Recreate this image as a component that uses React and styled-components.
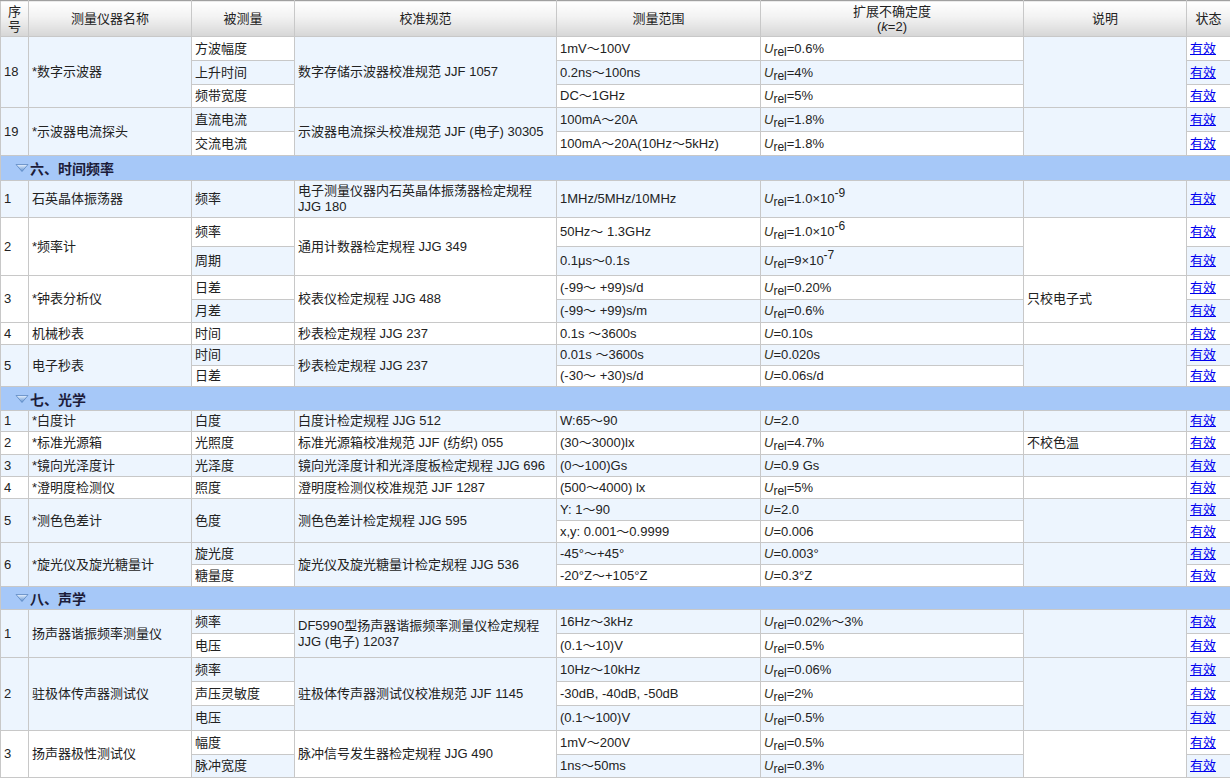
import React from "react";
import styled, { createGlobalStyle } from "styled-components";

const Global = createGlobalStyle`
  html, body { margin: 0; padding: 0; background: #fff; }
  body { font-family: "Liberation Sans", Arial, "Noto Sans CJK SC", sans-serif; font-size: 13px; color: #222; }
`;

const Table = styled.table`
  width: 1230px;
  border-collapse: collapse;
  table-layout: fixed;
  border: 1px solid #a0a0a0;
`;
const Th = styled.th`
  font-weight: normal;
  height: 35px;
  padding: 0 2px;
  line-height: 15px;
  text-align: center;
  border: 1px solid #c8c8c8;
  border-top-color: #a0a0a0;
  background: linear-gradient(#ffffff, #f2f2f2 45%, #d6d6d6);
  color: #222;
`;
const Tr = styled.tr`
  height: ${(p) => p.$h}px;
`;
const Td = styled.td`
  border: 1px solid #c8c8c8;
  padding: 0 3px;
  line-height: 16px;
  vertical-align: middle;
  white-space: nowrap;
  overflow: hidden;
  background: ${(p) => (p.$blue ? "#edf5fe" : "#ffffff")};
`;
const SectionCell = styled.td`
  background: #a6c8f8;
  border: 1px solid #c8c8c8;
  padding: 0 0 0 14px;
  font-weight: bold;
  color: #1c1c3a;
  font-size: 14px;
  font-family: "Noto Sans CJK SC", sans-serif;
`;
const SectionInner = styled.div`
  display: flex;
  align-items: center;
  gap: 1px;
`;
const Link = styled.a`
  color: #0000ee;
  text-decoration: underline;
  cursor: pointer;
`;
const U = styled.i`
  color: #3a3420;
`;
const Sub = styled.sub`
  font-size: 12px;
  vertical-align: -3px;
  line-height: 0;
`;
const Sup = styled.sup`
  font-size: 12px;
  vertical-align: 6px;
  line-height: 0;
`;

function Unc({ t }) {
  let rest = t;
  let sub = null;
  if (t.startsWith("Urel")) { sub = "rel"; rest = t.slice(4); }
  else rest = t.slice(1);
  const [base, sup] = rest.split("^");
  return (
    <>
      <U>U</U>
      {sub && <Sub>{sub}</Sub>}
      {base}
      {sup && <Sup>{sup}</Sup>}
    </>
  );
}

const Tri = () => (
  <svg width="14" height="10" viewBox="0 0 14 10">
    <defs>
      <linearGradient id="tg" x1="0" y1="0" x2="0" y2="1">
        <stop offset="0" stopColor="#e8f2ff" />
        <stop offset="1" stopColor="#5b8fd0" />
      </linearGradient>
    </defs>
    <path d="M1 1.5 H13 L7 8.5 Z" fill="url(#tg)" stroke="#5a86c0" strokeWidth="0.8" />
  </svg>
);

const B = true, W = false;
const data = [
  { seq: "18", name: "*数字示波器", spec: "数字存储示波器校准规范 JJF 1057", bg: B, subs: [
    ["方波幅度", "1mV～100V", "Urel=0.6%", 24, W],
    ["上升时间", "0.2ns～100ns", "Urel=4%", 24, B],
    ["频带宽度", "DC～1GHz", "Urel=5%", 23, W]] },
  { seq: "19", name: "*示波器电流探头", spec: "示波器电流探头校准规范 JJF (电子) 30305", bg: B, subs: [
    ["直流电流", "100mA～20A", "Urel=1.8%", 24, B],
    ["交流电流", "100mA～20A(10Hz～5kHz)", "Urel=1.8%", 24, W]] },
  { section: "六、时间频率", h: 25 },
  { seq: "1", name: "石英晶体振荡器", spec: ["电子测量仪器内石英晶体振荡器检定规程", "JJG 180"], bg: B, subs: [
    ["频率", "1MHz/5MHz/10MHz", "Urel=1.0×10^-9", 37, B]] },
  { seq: "2", name: "*频率计", spec: "通用计数器检定规程 JJG 349", bg: W, subs: [
    ["频率", "50Hz～ 1.3GHz", "Urel=1.0×10^-6", 29, W],
    ["周期", "0.1μs～0.1s", "Urel=9×10^-7", 29, B]] },
  { seq: "3", name: "*钟表分析仪", spec: "校表仪检定规程 JJG 488", note: "只校电子式", bg: W, subs: [
    ["日差", "(-99～ +99)s/d", "Urel=0.20%", 24, W],
    ["月差", "(-99～ +99)s/m", "Urel=0.6%", 23, B]] },
  { seq: "4", name: "机械秒表", spec: "秒表检定规程 JJG 237", bg: W, subs: [
    ["时间", "0.1s ～3600s", "U=0.10s", 22, W]] },
  { seq: "5", name: "电子秒表", spec: "秒表检定规程 JJG 237", bg: B, subs: [
    ["时间", "0.01s ～3600s", "U=0.020s", 21, B],
    ["日差", "(-30～ +30)s/d", "U=0.06s/d", 21, W]] },
  { section: "七、光学", h: 24 },
  { seq: "1", name: "*白度计", spec: "白度计检定规程 JJG 512", bg: B, subs: [
    ["白度", "W:65～90", "U=2.0", 21, B]] },
  { seq: "2", name: "*标准光源箱", spec: "标准光源箱校准规范 JJF (纺织) 055", note: "不校色温", bg: W, subs: [
    ["光照度", "(30～3000)lx", "Urel=4.7%", 23, W]] },
  { seq: "3", name: "*镜向光泽度计", spec: "镜向光泽度计和光泽度板检定规程 JJG 696", bg: B, subs: [
    ["光泽度", "(0～100)Gs", "U=0.9 Gs", 22, B]] },
  { seq: "4", name: "*澄明度检测仪", spec: "澄明度检测仪校准规范 JJF 1287", bg: W, subs: [
    ["照度", "(500～4000) lx", "Urel=5%", 22, W]] },
  { seq: "5", name: "*测色色差计", spec: "测色色差计检定规程 JJG 595", bg: B, subs: [
    ["色度", "Y: 1～90", "U=2.0", 22, B],
    [null, "x,y: 0.001～0.9999", "U=0.006", 22, W]] },
  { seq: "6", name: "*旋光仪及旋光糖量计", spec: "旋光仪及旋光糖量计检定规程 JJG 536", bg: B, subs: [
    ["旋光度", "-45°～+45°", "U=0.003°", 22, B],
    ["糖量度", "-20°Z～+105°Z", "U=0.3°Z", 22, W]] },
  { section: "八、声学", h: 23 },
  { seq: "1", name: "扬声器谐振频率测量仪", spec: ["DF5990型扬声器谐振频率测量仪检定规程", "JJG (电子) 12037"], bg: B, subs: [
    ["频率", "16Hz～3kHz", "Urel=0.02%～3%", 24, B],
    ["电压", "(0.1～10)V", "Urel=0.5%", 24, W]] },
  { seq: "2", name: "驻极体传声器测试仪", spec: "驻极体传声器测试仪校准规范 JJF 1145", bg: B, subs: [
    ["频率", "10Hz～10kHz", "Urel=0.06%", 24, B],
    ["声压灵敏度", "-30dB, -40dB, -50dB", "Urel=2%", 24, W],
    ["电压", "(0.1～100)V", "Urel=0.5%", 25, B]] },
  { seq: "3", name: "扬声器极性测试仪", spec: "脉冲信号发生器检定规程 JJG 490", bg: W, subs: [
    ["幅度", "1mV～200V", "Urel=0.5%", 24, W],
    ["脉冲宽度", "1ns～50ms", "Urel=0.3%", 23, B]] },
];

const widths = [28, 163, 103, 262, 204, 263, 163, 44];

function Group({ g }) {
  const n = g.subs.length;
  return g.subs.map((s, i) => {
    const [m, range, u, h, bg] = s;
    const mSpan = i === 0 && m !== null && n > 1 && g.subs[1][0] === null ? 2 : 1;
    return (
      <Tr key={i} $h={h}>
        {i === 0 && (
          <>
            <Td rowSpan={n} $blue={g.bg}>{g.seq}</Td>
            <Td rowSpan={n} $blue={g.bg}>{g.name}</Td>
          </>
        )}
        {m !== null && <Td rowSpan={mSpan} $blue={mSpan > 1 ? g.bg : bg}>{m}</Td>}
        {i === 0 && (
          <Td rowSpan={n} $blue={g.bg}>
            {Array.isArray(g.spec) ? (<>{g.spec[0]}<br />{g.spec[1]}</>) : g.spec}
          </Td>
        )}
        <Td $blue={bg}>{range}</Td>
        <Td $blue={bg}><Unc t={u} /></Td>
        {i === 0 && <Td rowSpan={n} $blue={g.bg}>{g.note || ""}</Td>}
        <Td $blue={bg}><Link>有效</Link></Td>
      </Tr>
    );
  });
}

export default function App() {
  return (
    <>
      <Global />
      <Table>
        <colgroup>
          {widths.map((w, i) => <col key={i} style={{ width: w }} />)}
        </colgroup>
        <thead>
          <tr>
            <Th>序号</Th>
            <Th>测量仪器名称</Th>
            <Th>被测量</Th>
            <Th>校准规范</Th>
            <Th>测量范围</Th>
            <Th>扩展不确定度<br />(<i>k</i>=2)</Th>
            <Th>说明</Th>
            <Th>状态</Th>
          </tr>
        </thead>
        <tbody>
          {data.map((g, i) =>
            g.section ? (
              <Tr key={i} $h={g.h}>
                <SectionCell colSpan={8}>
                  <SectionInner><Tri />{g.section}</SectionInner>
                </SectionCell>
              </Tr>
            ) : (
              <Group key={i} g={g} />
            )
          )}
        </tbody>
      </Table>
    </>
  );
}
